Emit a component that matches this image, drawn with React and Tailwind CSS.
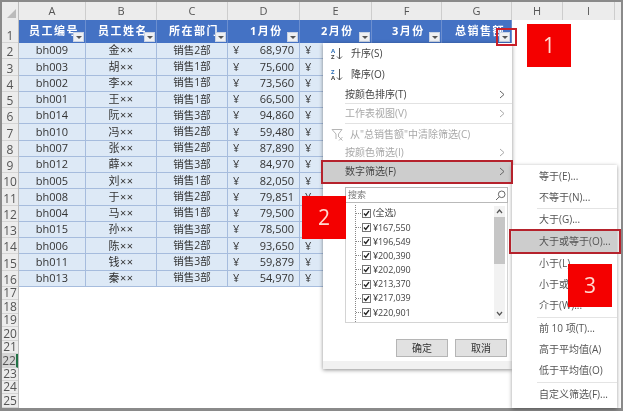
const rows = [
  ["bh009", "金××", "销售2部", "68,970"],
  ["bh003", "胡××", "销售1部", "75,600"],
  ["bh002", "李××", "销售1部", "73,560"],
  ["bh001", "王××", "销售1部", "66,500"],
  ["bh014", "阮××", "销售3部", "94,860"],
  ["bh010", "冯××", "销售2部", "59,480"],
  ["bh007", "张××", "销售2部", "87,890"],
  ["bh012", "薛××", "销售3部", "84,970"],
  ["bh005", "刘××", "销售1部", "82,050"],
  ["bh008", "于××", "销售2部", "79,851"],
  ["bh004", "马××", "销售1部", "79,500"],
  ["bh015", "孙××", "销售3部", "78,500"],
  ["bh006", "陈××", "销售2部", "93,650"],
  ["bh011", "钱××", "销售3部", "59,879"],
  ["bh013", "秦××", "销售3部", "54,970"],
];

const columns = [
  { letter: "A", width: "w-[67px]" },
  { letter: "B", width: "w-[71px]" },
  { letter: "C", width: "w-[71px]" },
  { letter: "D", width: "w-[72px]" },
  { letter: "E", width: "w-[72px]" },
  { letter: "F", width: "w-[70px]" },
  { letter: "G", width: "w-[70px]" },
  { letter: "H", width: "w-[51px]" },
  { letter: "I", width: "w-[52px]" },
];

const headers = [
  { label: "员工编号", width: "w-[67px]", text: "pl-[10px]" },
  { label: "员工姓名", width: "w-[71px]", text: "pl-[12px]" },
  { label: "所在部门", width: "w-[71px]", text: "pl-[12px]" },
  { label: "1月份", width: "w-[72px]", text: "pl-[22px]" },
  { label: "2月份", width: "w-[72px]", text: "pl-[21px]" },
  { label: "3月份", width: "w-[70px]", text: "pl-[20px]" },
  { label: "总销售额", width: "w-[70px]", text: "pl-[13px]" },
];

const prices = ["¥167,550", "¥196,549", "¥200,390", "¥202,090", "¥213,370", "¥217,039", "¥220,901", "¥221,300"];
const font = "font-['Open_Sans','Noto_Sans_CJK_SC',sans-serif]";

function FilterButton() {
  return (
    <span className="absolute right-[1px] bottom-[1px] flex h-[10px] w-[11px] items-center justify-center border border-[#c9d3e4] bg-[#eef0f3]">
      <span className="mt-[1px] h-0 w-0 border-x-[3px] border-t-[3px] border-x-transparent border-t-[#555]" />
    </span>
  );
}

function HeaderCell({ label, width, text }) {
  return (
    <div className={`relative h-full shrink-0 overflow-hidden border-r border-[#6c8fd0] bg-[#4472c4] ${width}`}>
      <span className={`block whitespace-nowrap pt-[3px] text-[11px] leading-[16px] font-bold tracking-[1.5px] text-white ${text}`}>{label}</span>
      <FilterButton />
    </div>
  );
}

function DataRow({ row }) {
  const cell = "flex h-full shrink-0 items-center justify-center border-r border-[#a6bcdd]";
  return (
    <div className="flex h-[16.27px] border-b border-[#a6bcdd] bg-[#dde9f6] text-[11px] text-[#333]">
      <div className={`${cell} w-[67px]`}>{row[0]}</div>
      <div className={`${cell} w-[71px] tracking-[0.5px]`}>{row[1]}</div>
      <div className={`${cell} w-[71px] text-[10.5px]`}>{row[2]}</div>
      <div className={`${cell} w-[72px] !justify-between pr-[5px] pl-[5px]`}>
        <span>¥</span>
        <span>{row[3]}</span>
      </div>
      <div className={`${cell} w-[72px] !justify-start pl-[5px]`}>¥</div>
      <div className={`${cell} w-[70px]`} />
      <div className={`${cell} w-[70px]`} />
    </div>
  );
}

function RowNumbers() {
  const label = "flex shrink-0 items-end justify-center border-b border-[#d4d4d4] text-[12px] leading-[13px] text-[#555]";
  const numbers = [];
  for (let n = 2; n <= 16; n++) {
    numbers.push(<div key={n} className={`${label} h-[16.27px]`}>{n}</div>);
  }
  for (let n = 17; n <= 25; n++) {
    numbers.push(
      <div key={n} className={`${label} h-[13.44px] ${n === 22 ? "border-r-2 !border-r-[#217346] bg-[#d6d6d6]" : ""}`}>
        {n}
      </div>
    );
  }
  return (
    <div className="w-[17px] shrink-0 overflow-hidden border-r border-[#bdbdbd] bg-[#ececec]">
      <div className={`${label} h-[23px]`}>1</div>
      {numbers}
    </div>
  );
}

function Chevron({ color = "#666" }) {
  return (
    <svg width="6" height="9" viewBox="0 0 6 9" fill="none" stroke={color} strokeWidth="1">
      <path d="M1 1l4 3.5L1 8" />
    </svg>
  );
}

function SortIcon({ top, bottom }) {
  return (
    <span className="flex w-[21px] shrink-0 items-center pl-[1px]">
      <span className="flex flex-col text-[6px] leading-[6px] font-bold">
        <span className="text-[#2f6fb5]">{top}</span>
        <span className="text-[#444]">{bottom}</span>
      </span>
      <svg width="7" height="13" viewBox="0 0 7 13" fill="none" stroke="#555" strokeWidth="1" className="ml-[1px]">
        <path d="M3.5 1v11M1 9.5l2.5 2.5L6 9.5" />
      </svg>
    </span>
  );
}

function MenuRow({ height, disabled, arrow, icon, children, className = "" }) {
  return (
    <div className={`flex items-center justify-between pr-[7px] ${height} ${disabled ? "text-[#a8a8a8]" : "text-[#444]"} ${className}`}>
      <span className="flex items-center whitespace-nowrap">
        {icon}
        {children}
      </span>
      {arrow && <Chevron color={disabled ? "#aaa" : "#666"} />}
    </div>
  );
}

function CheckItem({ label }) {
  return (
    <div className="flex h-[14.2px] items-center">
      <span className="mr-[1px] w-[5px] border-t border-dotted border-[#888]" />
      <span className="flex h-[9px] w-[9px] shrink-0 items-center justify-center border border-[#777] bg-white">
        <svg width="7" height="7" viewBox="0 0 7 7" fill="none" stroke="#222" strokeWidth="1.4">
          <path d="M1 3.5l1.8 2L6 1.2" />
        </svg>
      </span>
      <span className="ml-[2px] whitespace-nowrap text-[9px] tracking-[-0.1px] text-[#444]">{label}</span>
    </div>
  );
}

function FilterMenu() {
  return (
    <div className="absolute top-[43px] left-[323px] h-[326px] w-[189px] bg-white text-[10px] shadow-[0_1px_4px_rgba(0,0,0,0.45)]">
      <div className="pl-[7px]">
        <MenuRow height="h-[21px]" icon={<SortIcon top="A" bottom="Z" />}>升序(S)</MenuRow>
        <MenuRow height="h-[21px]" icon={<SortIcon top="Z" bottom="A" />}>降序(O)</MenuRow>
      </div>
      <div className="pl-[22px]">
        <MenuRow height="h-[19px]" arrow className="border-b border-[#e2e2e2]">按颜色排序(T)</MenuRow>
        <MenuRow height="h-[20px]" arrow disabled className="border-b border-[#e2e2e2]">工作表视图(V)</MenuRow>
      </div>
      <div className="pl-[8px]">
        <MenuRow
          height="h-[21px]"
          disabled
          icon={
            <svg width="13" height="13" viewBox="0 0 13 13" fill="none" stroke="#b5b5b5" strokeWidth="1" className="mr-[6px]">
              <path d="M1 1.5h10L7.5 6v3M5 6L1 1.5M5 6v5" />
              <path d="M8 9l3.5 3.5M11.5 9L8 12.5" />
            </svg>
          }
        >
          从"总销售额"中清除筛选(C)
        </MenuRow>
      </div>
      <div className="pl-[22px]">
        <MenuRow height="h-[15px]" arrow disabled>按颜色筛选(I)</MenuRow>
      </div>
      <div className="pl-[22px] bg-[#cdcdcd]">
        <MenuRow height="h-[22px]" arrow>数字筛选(F)</MenuRow>
      </div>

      <div className="mt-[5px] ml-[22px] flex h-[16px] w-[163px] items-center justify-between border border-[#b9b9b9] pr-[1px] pl-[2px] text-[#777]">
        <span className="text-[9px]">搜索</span>
        <svg width="11" height="11" viewBox="0 0 11 11" fill="none" stroke="#666" strokeWidth="1">
          <circle cx="6.7" cy="4.3" r="3.3" />
          <path d="M4.4 6.7L1 10" />
        </svg>
      </div>

      <div className="relative ml-[22px] flex h-[120px] w-[163px] justify-between overflow-hidden border-x border-b border-[#d4d4d4] pt-[2px]">
        <div className="ml-[9px] h-fit border-l border-dotted border-[#888] pt-[1px]">
          <CheckItem label="(全选)" />
          {prices.map((price) => (
            <CheckItem key={price} label={price} />
          ))}
        </div>
        <div className="mt-[1px] mr-[2px] flex h-[113px] w-[11px] flex-col items-center bg-[#f2f2f2]">
          <svg width="7" height="11" viewBox="0 0 7 11" fill="none" stroke="#555" strokeWidth="1.2">
            <path d="M1 7l2.5-3L6 7" />
          </svg>
          <div className="h-[47px] w-full bg-[#c6c6c6]" />
          <div className="flex-1" />
          <svg width="7" height="11" viewBox="0 0 7 11" fill="none" stroke="#555" strokeWidth="1.2">
            <path d="M1 4l2.5 3L6 4" />
          </svg>
        </div>
      </div>

      <div className="mt-[16px] mr-[5px] flex justify-end gap-[7px]">
        <button className="h-[18px] w-[52px] border border-[#b5b5b5] bg-[#e1e1e1] text-[10px] text-[#333]">确定</button>
        <button className="h-[18px] w-[52px] border border-[#b5b5b5] bg-[#e1e1e1] text-[10px] text-[#333]">取消</button>
      </div>
      <div className="mt-[4px] h-[8px] bg-[#f1f1f1]" />
    </div>
  );
}

function SubMenu() {
  const item = "flex h-[21px] items-center pl-[27px] whitespace-nowrap text-[#555]";
  const rule = "ml-[25px] border-b border-[#e4e4e4]";
  return (
    <div className="absolute top-[165px] left-[512px] h-[243px] w-[105px] bg-white pt-[1px] text-[10px] shadow-[0_1px_4px_rgba(0,0,0,0.4)]">
      <div className={item}>等于(E)...</div>
      <div className={item}>不等于(N)...</div>
      <div className={rule} />
      <div className={item}>大于(G)...</div>
      <div className={`${item} h-[23px] bg-[#cdcdcd]`}>大于或等于(O)...</div>
      <div className={item}>小于(L)...</div>
      <div className={item}>小于或等于(Q)...</div>
      <div className={item}>介于(W)...</div>
      <div className={`${rule} mt-[1px]`} />
      <div className={item}>前 10 项(T)...</div>
      <div className={item}>高于平均值(A)</div>
      <div className={item}>低于平均值(O)</div>
      <div className={`${rule} my-[1px]`} />
      <div className={item}>自定义筛选(F)...</div>
    </div>
  );
}

function Badge({ number, className }) {
  return (
    <div className={`absolute flex h-[43px] w-[44px] items-center justify-center bg-[#f40000] text-[21px] text-[#ffd9d0] ${className}`}>
      {number}
    </div>
  );
}

export default function App() {
  return (
    <div className={`relative h-[411px] w-[623px] overflow-hidden bg-white blur-[0.35px] ${font}`}>
      <div className="flex h-full flex-col border-t-2 border-r-2 border-b-[3px] border-l-2 border-[#8a8a8a]">
        {/* Column letters */}
        <div className="flex h-[18px] shrink-0 bg-[#ececec] text-[11px] leading-[18px] text-[#555]">
          <div className="flex w-[17px] shrink-0 items-end justify-end border-r border-[#bdbdbd] p-[2px]">
            <span className="h-0 w-0 border-b-[9px] border-l-[9px] border-b-[#bbb] border-l-transparent" />
          </div>
          {columns.map((col) => (
            <div key={col.letter} className={`shrink-0 border-r border-[#cdcdcd] text-center ${col.width}`}>
              {col.letter}
            </div>
          ))}
        </div>

        <div className="flex min-h-0 flex-1">
          <RowNumbers />
          <div>
            <div className="flex h-[23px]">
              {headers.map((h) => (
                <HeaderCell key={h.label} {...h} />
              ))}
            </div>
            {rows.map((row) => (
              <DataRow key={row[0]} row={row} />
            ))}
          </div>
        </div>
      </div>

      <FilterMenu />
      <SubMenu />

      {/* Callouts */}
      <div className="absolute top-[28px] left-[496px] h-[18px] w-[21px] border-2 border-[#c8202a]" />
      <div className="absolute top-[160px] left-[321px] h-[24px] w-[192px] border-2 border-[#b5222c]" />
      <div className="absolute top-[229px] left-[509px] h-[25px] w-[112px] border-2 border-[#b5222c]" />
      <Badge number="1" className="top-[24px] left-[527px]" />
      <Badge number="2" className="top-[196px] left-[302px]" />
      <Badge number="3" className="top-[264px] left-[568px]" />
    </div>
  );
}
